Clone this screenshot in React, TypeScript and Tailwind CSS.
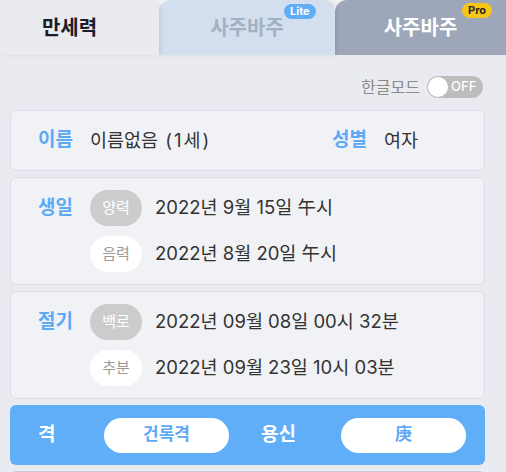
const font = { fontFamily: 'Inter, "Noto Sans CJK KR", sans-serif' };

function Pill({ label, active }: { label: string; active: boolean }) {
  return (
    <span
      className={
        "w-[52px] h-[36px] rounded-full flex items-center justify-center text-[15px] shrink-0 " +
        (active ? "bg-[#cccccc] text-white" : "bg-white text-[#9a9a9a]")
      }
    >
      {label}
    </span>
  );
}

function DateCard({ title, rows }: { title: string; rows: { tag: string; active: boolean; text: string }[] }) {
  return (
    <div className="ml-[10px] mr-[21px] bg-[#f1f2f5] border border-[#dcdcec] rounded-md pl-[27px] py-[12px] flex">
      <div className="w-[52px] h-[36px] flex items-center text-[19px] font-bold text-[#5ea9f5]">{title}</div>
      <div className="flex flex-col gap-[10px]">
        {rows.map((r) => (
          <div key={r.tag} className="flex items-center gap-[13px]">
            <Pill label={r.tag} active={r.active} />
            <span className="text-[18.5px] text-[#333333]">{r.text}</span>
          </div>
        ))}
      </div>
    </div>
  );
}

export default function App() {
  return (
    <div className="w-[506px] h-[472px] overflow-hidden bg-[#e9ebf0]" style={font}>
      <div className="flex h-[55px] bg-[#f2f2f4]">
        <div className="w-[159px] pr-[20px] bg-[#e9ebf0] rounded-tr-xl z-20 flex items-center justify-center text-[20px] font-bold text-[#1c1c2a] shadow-[2px_0_4px_rgba(0,0,0,0.08)]">
          만세력
        </div>
        <div className="relative w-[176px] bg-[#d3dfee] rounded-t-xl z-10 flex items-center justify-center text-[20px] font-bold text-[#a3b0c4] shadow-[2px_0_4px_rgba(0,0,0,0.08)]">
          사주바주
          <span className="absolute left-[125px] top-[4px] h-[15px] px-[6px] rounded-full bg-[#5fadf7] text-white text-[11px] font-bold leading-[15px]">
            Lite
          </span>
        </div>
        <div className="relative flex-1 bg-[#9ea6ba] rounded-tl-xl flex items-center justify-center text-[20px] font-bold text-white">
          사주바주
          <span className="absolute left-[127px] top-[3px] h-[15px] px-[6px] rounded-full bg-[#f5c518] text-[#2a2a2a] text-[11px] font-bold leading-[15px]">
            Pro
          </span>
        </div>
      </div>

      <div className="flex items-center justify-end pr-[23px] pt-[20px] pb-[11px]">
        <span className="text-[16px] text-[#8a8a8a] mr-[7px]">한글모드</span>
        <div className="w-[56px] h-[22px] rounded-full bg-[#bdbdbd] flex items-center pl-[1px]">
          <span className="w-[20px] h-[20px] rounded-full bg-white" />
          <span className="ml-[3px] text-[13px] text-white font-medium">OFF</span>
        </div>
      </div>

      <div className="flex flex-col gap-[6px]">
        <div className="ml-[10px] mr-[21px] h-[61px] bg-[#f1f2f5] border border-[#dcdcec] rounded-md pl-[27px] flex items-center">
          <span className="w-[52px] text-[19px] font-bold text-[#5ea9f5]">이름</span>
          <span className="w-[242px] text-[18.5px] text-[#333333]">
            이름없음 <span className="ml-[2px] tracking-[2px]">(1세)</span>
          </span>
          <span className="w-[52px] text-[19px] font-bold text-[#5ea9f5]">성별</span>
          <span className="text-[18.5px] text-[#333333]">여자</span>
        </div>

        <DateCard
          title="생일"
          rows={[
            { tag: "양력", active: true, text: "2022년 9월 15일 午시" },
            { tag: "음력", active: false, text: "2022년 8월 20일 午시" },
          ]}
        />

        <DateCard
          title="절기"
          rows={[
            { tag: "백로", active: true, text: "2022년 09월 08일 00시 32분" },
            { tag: "추분", active: false, text: "2022년 09월 23일 10시 03분" },
          ]}
        />

        <div className="ml-[10px] mr-[21px] h-[60px] bg-[#60aef8] rounded-md pl-[28px] flex items-center">
          <span className="w-[66px] text-[19px] font-bold text-white">격</span>
          <span className="w-[125px] h-[35px] rounded-full bg-white flex items-center justify-center text-[17px] font-bold text-[#5ea9f5]">
            건록격
          </span>
          <span className="w-[112px] pl-[32px] text-[19px] font-bold text-white">용신</span>
          <span className="w-[125px] h-[35px] rounded-full bg-white flex items-center justify-center text-[17px] font-bold text-[#5ea9f5]">
            庚
          </span>
        </div>

        <div className="ml-[10px] mr-[21px] h-[20px] bg-[#f1f2f5] border-t border-x border-[#c9cad6] rounded-t-md" />
      </div>
    </div>
  );
}
